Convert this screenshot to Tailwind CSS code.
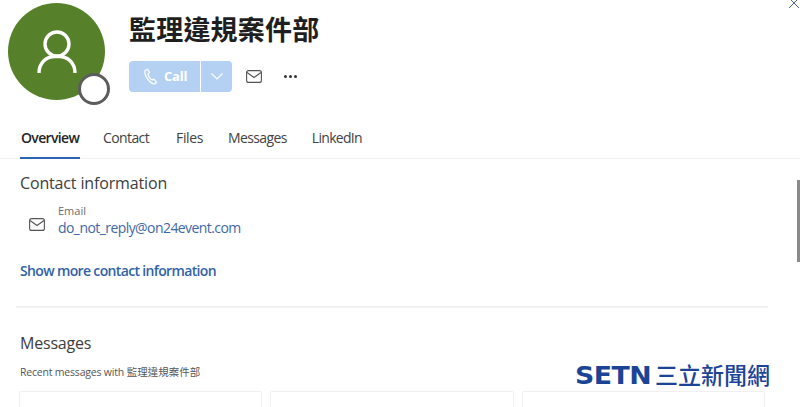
<!DOCTYPE html>
<html lang="zh-Hant">
<head>
  <meta charset="UTF-8">
  <title>監理違規案件部</title>
  <script src="https://cdn.jsdelivr.net/npm/@tailwindcss/browser@4"></script>
</head>
<body class="bg-white text-[#242424] font-['Open_Sans','Noto_Sans_CJK_TC',sans-serif] overflow-hidden">
  <div class="relative w-[800px] h-[407px] overflow-hidden">

    <!-- close -->
    <svg class="absolute left-[788px] top-[-3px] w-[12px] h-[12px] text-[#4a6a9c]" viewBox="0 0 12 12" fill="none" stroke="currentColor" stroke-width="1"><path d="M1 1l10 10M11 1L1 11"/></svg>

    <!-- header -->
    <div class="flex pl-[8px] pt-[3px] h-[123px]">
      <div class="relative w-[97px] h-[97px] rounded-full bg-[#56812a] shrink-0 flex items-center justify-center">
        <svg class="w-[40px] h-[44px]" viewBox="0 0 40 44" fill="none" stroke="white" stroke-width="3.4"><circle cx="20" cy="14" r="12"/><path d="M2 43C2 33 9 26.500 18 26.500h4C31 26.500 38 33 38 43"/></svg>
        <div class="absolute left-[70px] top-[70px] w-[32px] h-[32px] rounded-full bg-white border-[3px] border-[#5c5c5c]"></div>
      </div>
      <div class="ml-[24px] flex flex-col">
        <h1 class="mt-[7px] h-[40px] text-[27px] leading-[40px] font-bold tracking-[0.2px] text-[#1f1f1f]">監理違規案件部</h1>
        <div class="mt-[11px] flex items-center">
          <div class="flex h-[31px] w-[103px] rounded-[4px] bg-[#b4d0f2] text-white overflow-hidden">
            <div class="w-[72px] flex items-center pl-[14px] gap-[5px] border-r border-white">
              <svg class="w-[16px] h-[17px]" viewBox="0 0 16 17" fill="none" stroke="white" stroke-width="1.200"><path d="M2 2.500l2.500-1.300 2 3.300-1.500 1.500c.3 2 2.200 5 4 6l2-.8 2.600 2.900-2 1.900C7 15.500 1 8 2 2.500z"/></svg>
              <span class="text-[13px] font-bold leading-none tracking-[-0.2px]">Call</span>
            </div>
            <div class="flex-1 flex items-center justify-center">
              <svg class="w-[12px] h-[7px]" viewBox="0 0 12 7" fill="none" stroke="white" stroke-width="1.100"><path d="M.5.500L6 6l5.500-5.500"/></svg>
            </div>
          </div>
          <svg class="ml-[14px] w-[16px] h-[13px]" viewBox="0 0 16 13" fill="none" stroke="#555" stroke-width="1.100"><rect x=".6" y=".6" width="14.800" height="11.800" rx="2"/><path d="M1 2.500l7 5 7-5"/></svg>
          <div class="ml-[22px] flex gap-[2.500px]">
            <span class="w-[2.500px] h-[2.500px] rounded-full bg-[#333]"></span>
            <span class="w-[2.500px] h-[2.500px] rounded-full bg-[#333]"></span>
            <span class="w-[2.500px] h-[2.500px] rounded-full bg-[#333]"></span>
          </div>
        </div>
      </div>
    </div>

    <!-- tabs -->
    <div class="flex h-[36px] border-b border-[#f0f0f0] pl-[20px] text-[14px] leading-[30px] text-[#424242]">
      <div class="relative w-[60px] pl-[1px] font-semibold text-[#242424] tracking-[-0.65px]">Overview<div class="absolute left-0 right-0 bottom-[-1px] h-[2px] bg-[#2b63b5]"></div></div>
      <div class="ml-[23px] tracking-[-0.6px]">Contact</div>
      <div class="ml-[27px] tracking-[-0.4px]">Files</div>
      <div class="ml-[25px] tracking-[-0.6px]">Messages</div>
      <div class="ml-[25px] tracking-[-0.7px]">LinkedIn</div>
    </div>

    <!-- contact information -->
    <div class="pl-[20px] pt-[13px]">
      <h2 class="text-[16px] leading-[22px] text-[#3d3d3d] tracking-[-0.15px]">Contact information</h2>
      <div class="mt-[9px] flex">
        <svg class="ml-[9px] mt-[15px] w-[16px] h-[13px]" viewBox="0 0 16 13" fill="none" stroke="#555" stroke-width="1.100"><rect x=".6" y=".6" width="14.800" height="11.800" rx="2"/><path d="M1 2.500l7 5 7-5"/></svg>
        <div class="ml-[13px]">
          <div class="text-[11px] leading-[15px] text-[#6b6b6b]">Email</div>
          <div class="text-[14px] leading-[20px] text-[#3f67a6] tracking-[-0.57px]">do_not_reply@on24event.com</div>
        </div>
      </div>
      <div class="mt-[23px] text-[14px] leading-[20px] font-semibold text-[#2f62a8] tracking-[-0.65px]">Show more contact information</div>
    </div>

    <div class="ml-[16px] mr-[32px] mt-[25px] h-[2px] bg-[#f2f2f2]"></div>

    <!-- messages -->
    <div class="pl-[20px] pt-[24px]">
      <h2 class="text-[16px] leading-[22px] text-[#3d3d3d] tracking-[-0.2px]">Messages</h2>
      <div class="mt-[10px] text-[10.500px] leading-[16px] text-[#555]"><span class="tracking-[-0.2px]">Recent messages with</span> 監理違規案件部</div>
      <div class="mt-[11px] flex gap-[8px] ml-[-1px]">
        <div class="w-[243px] h-[40px] border border-[#f0f0f0] rounded-[2px]"></div>
        <div class="w-[244px] h-[40px] border border-[#f0f0f0] rounded-[2px]"></div>
        <div class="w-[243px] h-[40px] border border-[#f0f0f0] rounded-[2px]"></div>
      </div>
    </div>

    <!-- scrollbar -->
    <div class="absolute left-[797px] top-[180px] w-[3px] h-[82px] bg-[#8a8a8a]"></div>

    <!-- watermark -->
    <div class="absolute left-[575px] top-[362px] h-[26px] w-[197px] bg-white/90 flex items-center text-[#1c4496] leading-none">
      <span class="inline-block w-[80px] shrink-0 text-[25px] font-bold font-['DejaVu_Sans',sans-serif] tracking-[-0.5px] scale-x-[1.07] origin-left">SETN</span>
      <span class="text-[23px] font-medium whitespace-nowrap">三立新聞網</span>
    </div>
  </div>
</body>
</html>
